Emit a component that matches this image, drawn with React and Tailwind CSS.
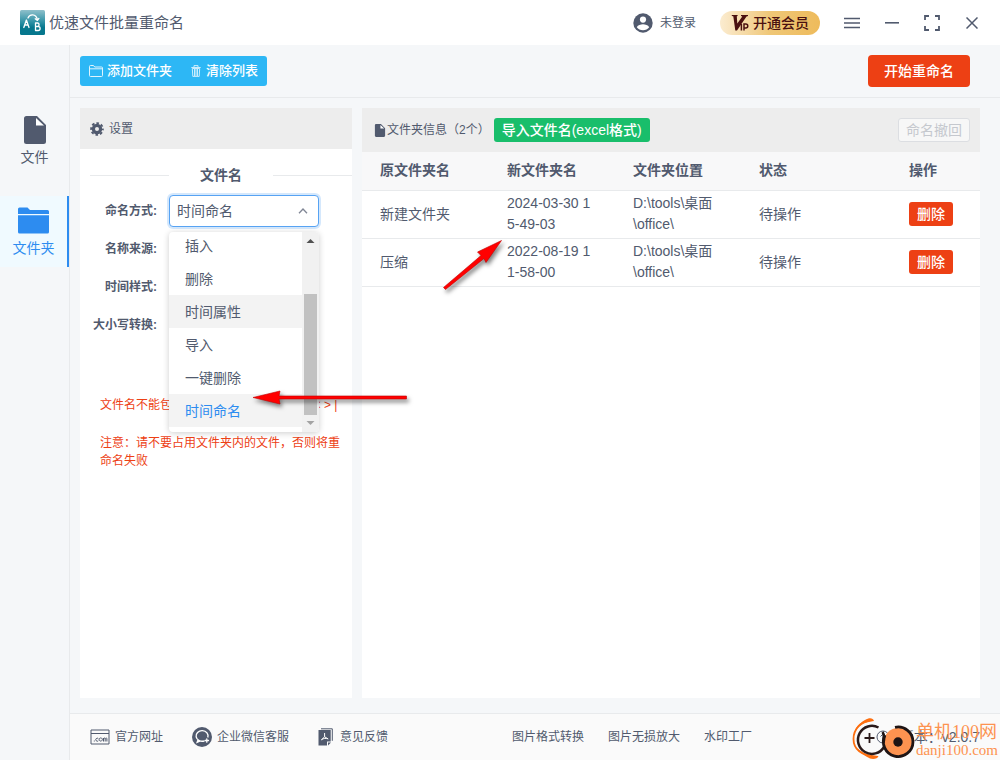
import { useState } from "react";

const MODES = ["插入", "删除", "时间属性", "导入", "一键删除", "时间命名"];

const FOLDERS = [
  { name: "新建文件夹", next: "2024-03-30 15-49-03", path: "D:\\tools\\桌面\\office\\", status: "待操作" },
  { name: "压缩", next: "2022-08-19 11-58-00", path: "D:\\tools\\桌面\\office\\", status: "待操作" },
];

function AppLogo() {
  return (
    <svg width="25" height="25" viewBox="0 0 25 25" className="shrink-0">
      <defs>
        <linearGradient id="logo" x1="0" y1="0" x2="0" y2="1">
          <stop offset="0" stopColor="#8fc0cb" />
          <stop offset="0.5" stopColor="#2a8fa3" />
          <stop offset="0.7" stopColor="#06778d" />
          <stop offset="1" stopColor="#06778d" />
        </linearGradient>
      </defs>
      <rect width="25" height="25" rx="1.5" fill="url(#logo)" />
      <g fill="none" stroke="#fff" strokeWidth="1.3" strokeLinecap="round" strokeLinejoin="round">
        <path d="M3.8 17.5 6.4 10 9 17.5M4.7 15h3.500" />
        <path d="M15.500 13v7.500h2.600a2 2 0 0 0 0-4h-2.600M15.500 13h2.200a1.800 1.800 0 0 1 0 3.500" />
        <path d="M8 8C9.500 3.800 16 3.500 17.400 9.500M15.200 8.800l2.200 1.600 1.500-2" />
      </g>
    </svg>
  );
}

function UserIcon() {
  return (
    <svg width="20" height="20" viewBox="0 0 20 20">
      <circle cx="10" cy="10" r="9.700" fill="#515a6e" />
      <circle cx="10" cy="6.600" r="3.100" fill="#fff" />
      <path d="M3.800 14.200c1-2.200 4-3 6.200-3s5.200.8 6.200 3c-1.400 2-3.700 3-6.200 3s-4.800-1-6.200-3z" fill="#fff" />
    </svg>
  );
}

function VipMark() {
  return (
    <svg width="18" height="18" viewBox="0 0 18 18">
      <path d="M.8 1H6.600v1L5.800 2.300 6.300 9.500 11.300 2.500 10 2V1h7v1l-1.500.4L6 16.500H4.300L2.300 2.300.8 2z" fill="#4a1010" />
      <path d="M10.400 10v6.500M13 16.500V10h1.800a1.700 1.700 0 0 1 0 3.900H13" fill="none" stroke="#4a1010" strokeWidth="1.500" />
    </svg>
  );
}

function FileIcon({ className }) {
  return (
    <svg viewBox="0 0 22 28" className={className} fill="currentColor">
      <path d="M2.500 0H13l9 9v16.500a2.500 2.500 0 0 1-2.500 2.500h-17A2.500 2.500 0 0 1 0 25.500v-23A2.500 2.500 0 0 1 2.500 0z" />
      <path d="M12 2v7.500h8z" fill="#fff" />
    </svg>
  );
}

function FolderIcon() {
  return (
    <svg width="31" height="27" viewBox="0 0 31 27" fill="currentColor">
      <path d="M0 7V2a1.500 1.500 0 0 1 1.500-1.500h8L12 3h17.500A1.500 1.500 0 0 1 31 4.500V7z" />
      <path d="M0 8.200h31V25a1.500 1.500 0 0 1-1.500 1.500h-28A1.500 1.500 0 0 1 0 25z" />
    </svg>
  );
}

function GearIcon() {
  return (
    <svg width="14" height="14" viewBox="0 0 14 14" fill="none" stroke="#515a6e">
      <circle cx="7" cy="7" r="3.600" strokeWidth="3.200" />
      <circle cx="7" cy="7" r="5.900" strokeWidth="1.800" strokeDasharray="2.600 2.034" strokeDashoffset="1.300" />
    </svg>
  );
}

function FolderOutline() {
  return (
    <svg width="14" height="12" viewBox="0 0 14 12" fill="none" stroke="#fff" opacity="0.85">
      <path d="M.5 10.500v-9a1 1 0 0 1 1-1h3l1.200 1.500h6.800a1 1 0 0 1 1 1v7.500a1 1 0 0 1-1 1h-11a1 1 0 0 1-1-1zM.5 3.800h13" />
    </svg>
  );
}

function TrashIcon() {
  return (
    <svg width="10" height="12" viewBox="0 0 10 12" fill="none" stroke="#fff" opacity="0.75">
      <path d="M.3 2.500h9.400M3 2.300V.6h4v1.700" />
      <path d="M1.300 3.500 1.800 11.400h6.400l.5-7.900zM3.500 4v7M5 4v7M6.500 4v7" />
    </svg>
  );
}

function SiteIcon() {
  return (
    <svg width="20" height="16" viewBox="0 0 20 16" fill="none" stroke="#515a6e">
      <path d="M1 1h18v14H1zM1 4.500h18" />
      <path d="M3.800 12h1M8.300 9.600a1.500 1.500 0 1 0 0 2.200M10.700 8.900a1.600 1.600 0 1 0 .1 0M13.500 12.500V9M13.500 9.700c.6-1 1.700-.8 1.700 0v2.800M15.200 9.700c.6-1 1.700-.8 1.700 0v2.800" />
    </svg>
  );
}

function ServiceIcon() {
  return (
    <svg width="20" height="20" viewBox="0 0 20 20">
      <circle cx="10" cy="10" r="10" fill="#515a6e" />
      <path d="M12.500 13.800A6 5.300 0 1 1 15.800 10.500M6 13l-.8 2.200 2.600-1.100" fill="none" stroke="#fff" strokeWidth="1.400" />
      <path d="M14.800 11.800v3.400M13.100 13.500h3.400" stroke="#fff" strokeWidth="1.300" strokeLinecap="round" />
    </svg>
  );
}

function FeedbackIcon() {
  return (
    <svg width="15" height="18" viewBox="0 0 15 18">
      <path d="M3 .8h11.300v12" fill="none" stroke="#515a6e" />
      <path d="M.5 2h12.200v11.500H9v4H.5z" fill="#515a6e" />
      <path d="M10 14.500h3L10 17.500z" fill="#515a6e" />
      <path d="M6.600 5v3.800L3.300 12M6.600 8.800 10.300 11M3.500 11.500c2-1 4.500-1.500 6.500-.7" fill="none" stroke="#fff" />
    </svg>
  );
}

function VersionIcon() {
  return (
    <svg width="14" height="14" viewBox="0 0 14 14" fill="none" stroke="#515a6e">
      <circle cx="7" cy="7" r="6" />
      <path d="M7 10V4M4.500 6.500 7 4l2.500 2.500" />
    </svg>
  );
}

function Header() {
  return (
    <header className="flex h-[45px] items-center bg-white pl-5 pr-2">
      <AppLogo />
      <h1 className="ml-1 text-[15px] leading-5">优速文件批量重命名</h1>
      <button className="ml-auto flex items-center gap-[7px] text-xs">
        <UserIcon />
        未登录
      </button>
      <button className="ml-6 mr-3 flex h-6 w-[100px] items-center justify-center gap-1 rounded-full bg-linear-to-r from-[#fbecd0] via-[#efc777] to-[#eebb5b] text-sm font-medium text-[#4a1010]">
        <VipMark />
        开通会员
      </button>
      <button aria-label="菜单" className="flex h-10 w-10 items-center justify-center">
        <svg width="16" height="12" viewBox="0 0 16 12" stroke="#515a6e" strokeWidth="1.500">
          <path d="M0 1.500h16M0 6h16M0 10.500h16" />
        </svg>
      </button>
      <button aria-label="最小化" className="flex h-10 w-10 items-center justify-center">
        <svg width="14" height="2" viewBox="0 0 14 2" fill="#515a6e">
          <path d="M0 0h14v1.600H0z" />
        </svg>
      </button>
      <button aria-label="最大化" className="flex h-10 w-10 items-center justify-center">
        <svg width="16" height="16" viewBox="0 0 16 16" fill="none" stroke="#515a6e" strokeWidth="1.800">
          <path d="M1 5V1h4M11 1h4v4M15 11v4h-4M5 15H1v-4" />
        </svg>
      </button>
      <button aria-label="关闭" className="flex h-10 w-10 items-center justify-center">
        <svg width="12" height="12" viewBox="0 0 12 12" stroke="#515a6e" strokeWidth="1.500">
          <path d="M.5.5l11 11M11.500.5l-11 11" />
        </svg>
      </button>
    </header>
  );
}

function Sidebar() {
  return (
    <nav className="flex w-[70px] shrink-0 flex-col gap-5 border-r border-[#e8eaec] pt-[60px] text-sm">
      <a href="#file" className="flex h-[71px] flex-col items-center pt-[11px]">
        <FileIcon className="h-7 w-[22px]" />
        <span className="mt-[3px] leading-5">文件</span>
      </a>
      <a
        href="#folder"
        className="flex h-[71px] flex-col items-center border-r-2 border-[#2d8cf0] bg-[#f0faff] pt-[11px] text-[#2d8cf0]"
      >
        <FolderIcon />
        <span className="mt-1 leading-5">文件夹</span>
      </a>
    </nav>
  );
}

function Toolbar() {
  return (
    <div className="flex h-[53px] items-center justify-between border-b border-[#e8eaec] pl-[10px] pr-[30px]">
      <div className="flex h-[30px] items-center gap-[19px] rounded-[3px] bg-[#2db7f5] px-[9px] text-[13px] font-medium text-white">
        <button className="flex items-center gap-1">
          <FolderOutline />
          添加文件夹
        </button>
        <button className="flex items-center gap-[5px]">
          <TrashIcon />
          清除列表
        </button>
      </div>
      <button className="h-8 rounded bg-[#ed4014] px-4 text-sm font-medium text-white">开始重命名</button>
    </div>
  );
}

function ModeMenu({ mode, onPick }) {
  return (
    <div className="absolute left-0 top-[37px] z-10 flex h-[200px] w-full overflow-hidden rounded bg-white shadow-[0_1px_6px_rgba(0,0,0,0.2)]">
      <ul className="flex flex-1 flex-col justify-end pb-[5px]">
        {MODES.map((item) => (
          <li key={item}>
            <button
              onClick={() => onPick(item)}
              className={
                "block h-[33px] w-full px-4 text-left text-sm " +
                (item === mode ? "bg-[#f3f3f3] text-[#2d8cf0]" : item === "时间属性" ? "bg-[#f3f3f3]" : "")
              }
            >
              {item}
            </button>
          </li>
        ))}
      </ul>
      <div className="flex w-[17px] flex-col items-center bg-[#f1f1f1]">
        <svg width="17" height="17" viewBox="0 0 17 17">
          <path d="M4.500 11 8.500 7l4 4z" fill="#505050" />
        </svg>
        <div className="mt-auto h-[121px] w-[13px] bg-[#c1c1c1]" />
        <svg width="17" height="17" viewBox="0 0 17 17">
          <path d="M4.500 6h8l-4 4z" fill="#a3a3a3" />
        </svg>
      </div>
    </div>
  );
}

function Field({ id, label, children }) {
  return (
    <div className="flex h-8 items-center">
      <label htmlFor={id} className="w-[79px] shrink-0 pr-3 text-right text-xs font-bold">
        {label}:
      </label>
      <div className="relative h-8 w-[150px]">{children}</div>
    </div>
  );
}

function Settings() {
  const [mode, setMode] = useState("时间命名");
  const inputStyle = "h-8 w-full rounded border border-[#dcdee2] bg-white px-2 text-sm";

  return (
    <section className="w-[272px] shrink-0 bg-white">
      <h2 className="flex h-[41px] items-center gap-[5px] bg-[#ededed] pl-[10px] text-xs">
        <GearIcon />
        设置
      </h2>
      <div className="pl-[10px]">
        <h3 className="mb-[10px] mt-4 flex items-center gap-[31px] text-sm font-bold leading-5">
          <span className="h-px flex-1 bg-[#e8eaec]" />
          文件名
          <span className="h-px flex-1 bg-[#e8eaec]" />
        </h3>
        <div className="flex flex-col gap-[6px]">
          <Field id="mode" label="命名方式">
            <select
              id="mode"
              value={mode}
              onChange={(e) => setMode(e.target.value)}
              className="h-8 w-full appearance-none rounded border border-[#57a3f3] bg-white px-[7px] text-sm shadow-[0_0_0_2px_rgba(45,140,240,0.2)]"
            >
              {MODES.map((item) => (
                <option key={item}>{item}</option>
              ))}
            </select>
            <svg width="10" height="6" viewBox="0 0 10 6" className="pointer-events-none absolute right-[11px] top-[13px]" fill="none" stroke="#808695" strokeWidth="1.300">
              <path d="M1 5.200 5 1l4 4.200" />
            </svg>
            <ModeMenu mode={mode} onPick={setMode} />
          </Field>
          <Field id="source" label="名称来源">
            <input id="source" className={inputStyle} />
          </Field>
          <Field id="format" label="时间样式">
            <input id="format" className={inputStyle} />
          </Field>
          <Field id="case" label="大小写转换">
            <input id="case" className={inputStyle} />
          </Field>
        </div>
        <div className="mt-[55px] flex flex-col gap-5 pl-[10px] pr-[10px] text-xs leading-[18px] text-[#ed4014]">
          <p className="whitespace-nowrap">文件名不能包含下列任何字符：\ / : * ? " &lt; &gt; |</p>
          <p>注意：请不要占用文件夹内的文件，否则将重命名失败</p>
        </div>
      </div>
    </section>
  );
}

function FolderTable() {
  return (
    <table className="w-full table-fixed border-b border-[#dcdee2] text-left text-sm leading-[21px]">
      <thead>
        <tr className="h-[38px] border-b border-[#e8eaec] bg-[#f8f8f9]">
          <th className="w-[127px] pl-[18px] font-bold">原文件夹名</th>
          <th className="w-[126px] pl-[18px] font-bold">新文件夹名</th>
          <th className="w-[126px] pl-[18px] font-bold">文件夹位置</th>
          <th className="w-[150px] pl-[18px] font-bold">状态</th>
          <th className="pl-[18px] font-bold">操作</th>
        </tr>
      </thead>
      <tbody>
        {FOLDERS.map((row) => (
          <tr key={row.name} className="h-12 border-b border-[#e8eaec]">
            <td className="px-[18px]">{row.name}</td>
            <td className="break-all pl-[18px] pr-5">{row.next}</td>
            <td className="break-all pl-[18px] pr-5">{row.path}</td>
            <td className="px-[18px]">{row.status}</td>
            <td className="pl-[18px]">
              <button className="block h-6 rounded-[3px] bg-[#ed4014] px-2 text-sm font-medium text-white">删除</button>
            </td>
          </tr>
        ))}
      </tbody>
    </table>
  );
}

function FolderPanel() {
  return (
    <section className="min-w-0 flex-1 bg-white">
      <div className="flex h-11 items-center bg-[#ededed] pl-3 pr-[10px]">
        <FileIcon className="mr-px h-[13px] w-3" />
        <h2 className="mr-1 text-xs">文件夹信息（2个）</h2>
        <button className="h-6 rounded-[3px] bg-[#19be6b] px-2 text-sm font-medium text-white">
          导入文件名(excel格式)
        </button>
        <button disabled className="ml-auto h-6 rounded-[3px] border border-[#dcdee2] bg-[#f7f7f7] px-[7px] text-sm text-[#c5c8ce]">
          命名撤回
        </button>
      </div>
      <FolderTable />
    </section>
  );
}

function Footer() {
  return (
    <footer className="flex h-[47px] items-center justify-between border-t border-[#e8eaec] bg-[#fafafa] px-5 text-xs">
      <div className="flex items-center gap-[29px]">
        <a href="#site" className="flex items-center gap-[5px]">
          <SiteIcon />
          官方网址
        </a>
        <a href="#service" className="flex items-center gap-[5px]">
          <ServiceIcon />
          企业微信客服
        </a>
        <a href="#feedback" className="flex items-center gap-[7px]">
          <FeedbackIcon />
          意见反馈
        </a>
      </div>
      <div className="flex items-center gap-6">
        <a href="#convert">图片格式转换</a>
        <a href="#enlarge">图片无损放大</a>
        <a href="#watermark">水印工厂</a>
      </div>
      <div className="flex items-center gap-[10px] text-sm">
        <VersionIcon />
        版本：v2.0.7
      </div>
    </footer>
  );
}

function SiteStamp() {
  return (
    <div className="pointer-events-none absolute bottom-0 right-0 flex items-center gap-px pr-[2px] text-[#fd9350]">
      <svg width="66" height="44" viewBox="0 0 66 44" fill="none">
        <path d="M23 4C12 5 4.500 13 4.500 23S12 39.500 28 41" stroke="#fd6f10" strokeWidth="1.800" />
        <path d="M25 5C24 1.500 20 1.500 16 4 10 7.500 7 11 5.500 16 10 9 16 6 25 5zM8 32c3 5 8 8 13 10.500 3 1 8 .5 8.500-2.500C21 40 13 37 8 32z" fill="#fd6f10" />
        <path d="M29.500 11.500A14 14 0 1 0 35 31" stroke="#2a1a1a" strokeWidth="2.500" />
        <path d="M20.500 17v10M15.500 22h10" stroke="#2a1a1a" strokeWidth="1.800" />
        <circle cx="49" cy="26" r="14" fill="#fd9350" />
        <path d="M46 11.300A14.800 14.800 0 1 1 36 19" stroke="#1e1414" strokeWidth="2.800" />
        <path d="M33.500 16c2 3 2 7 1 11" stroke="#1e1414" strokeWidth="2.400" />
        <circle cx="49" cy="26" r="4.700" fill="#1e1414" />
      </svg>
      <div className="whitespace-nowrap pt-1 font-['Liberation_Serif','Noto_Sans_CJK_SC',serif]">
        <div className="text-lg leading-5">单机100网</div>
        <div className="text-[15px] leading-[17px]">danji100.com</div>
      </div>
    </div>
  );
}

function Arrows() {
  return (
    <svg
      width="300"
      height="200"
      viewBox="0 0 300 200"
      className="pointer-events-none absolute left-[230px] top-[230px] z-20 drop-shadow-[2px_3px_2px_rgba(0,0,0,0.5)]"
    >
      <g fill="#f00" stroke="#c00000" strokeWidth="0.6">
        <path d="M215.500 59.500 213.500 57.500 251 25.500 247.500 22 271.500 10.500 256 32.500 254 28.500z" />
        <path d="M23 167.500 50 161l-1 5h127.500v3H49l1 5z" />
      </g>
    </svg>
  );
}

export default function App() {
  return (
    <div className="relative flex min-h-screen flex-col bg-[#f5f7f9] font-['Liberation_Sans','Noto_Sans_CJK_SC',sans-serif] text-[#515a6e]">
      <Header />
      <div className="flex flex-1">
        <Sidebar />
        <div className="flex min-w-0 flex-1 flex-col">
          <Toolbar />
          <main className="flex flex-1 gap-[10px] pb-[15px] pl-[10px] pr-5 pt-[10px]">
            <Settings />
            <FolderPanel />
          </main>
          <Footer />
        </div>
      </div>
      <Arrows />
      <SiteStamp />
    </div>
  );
}
